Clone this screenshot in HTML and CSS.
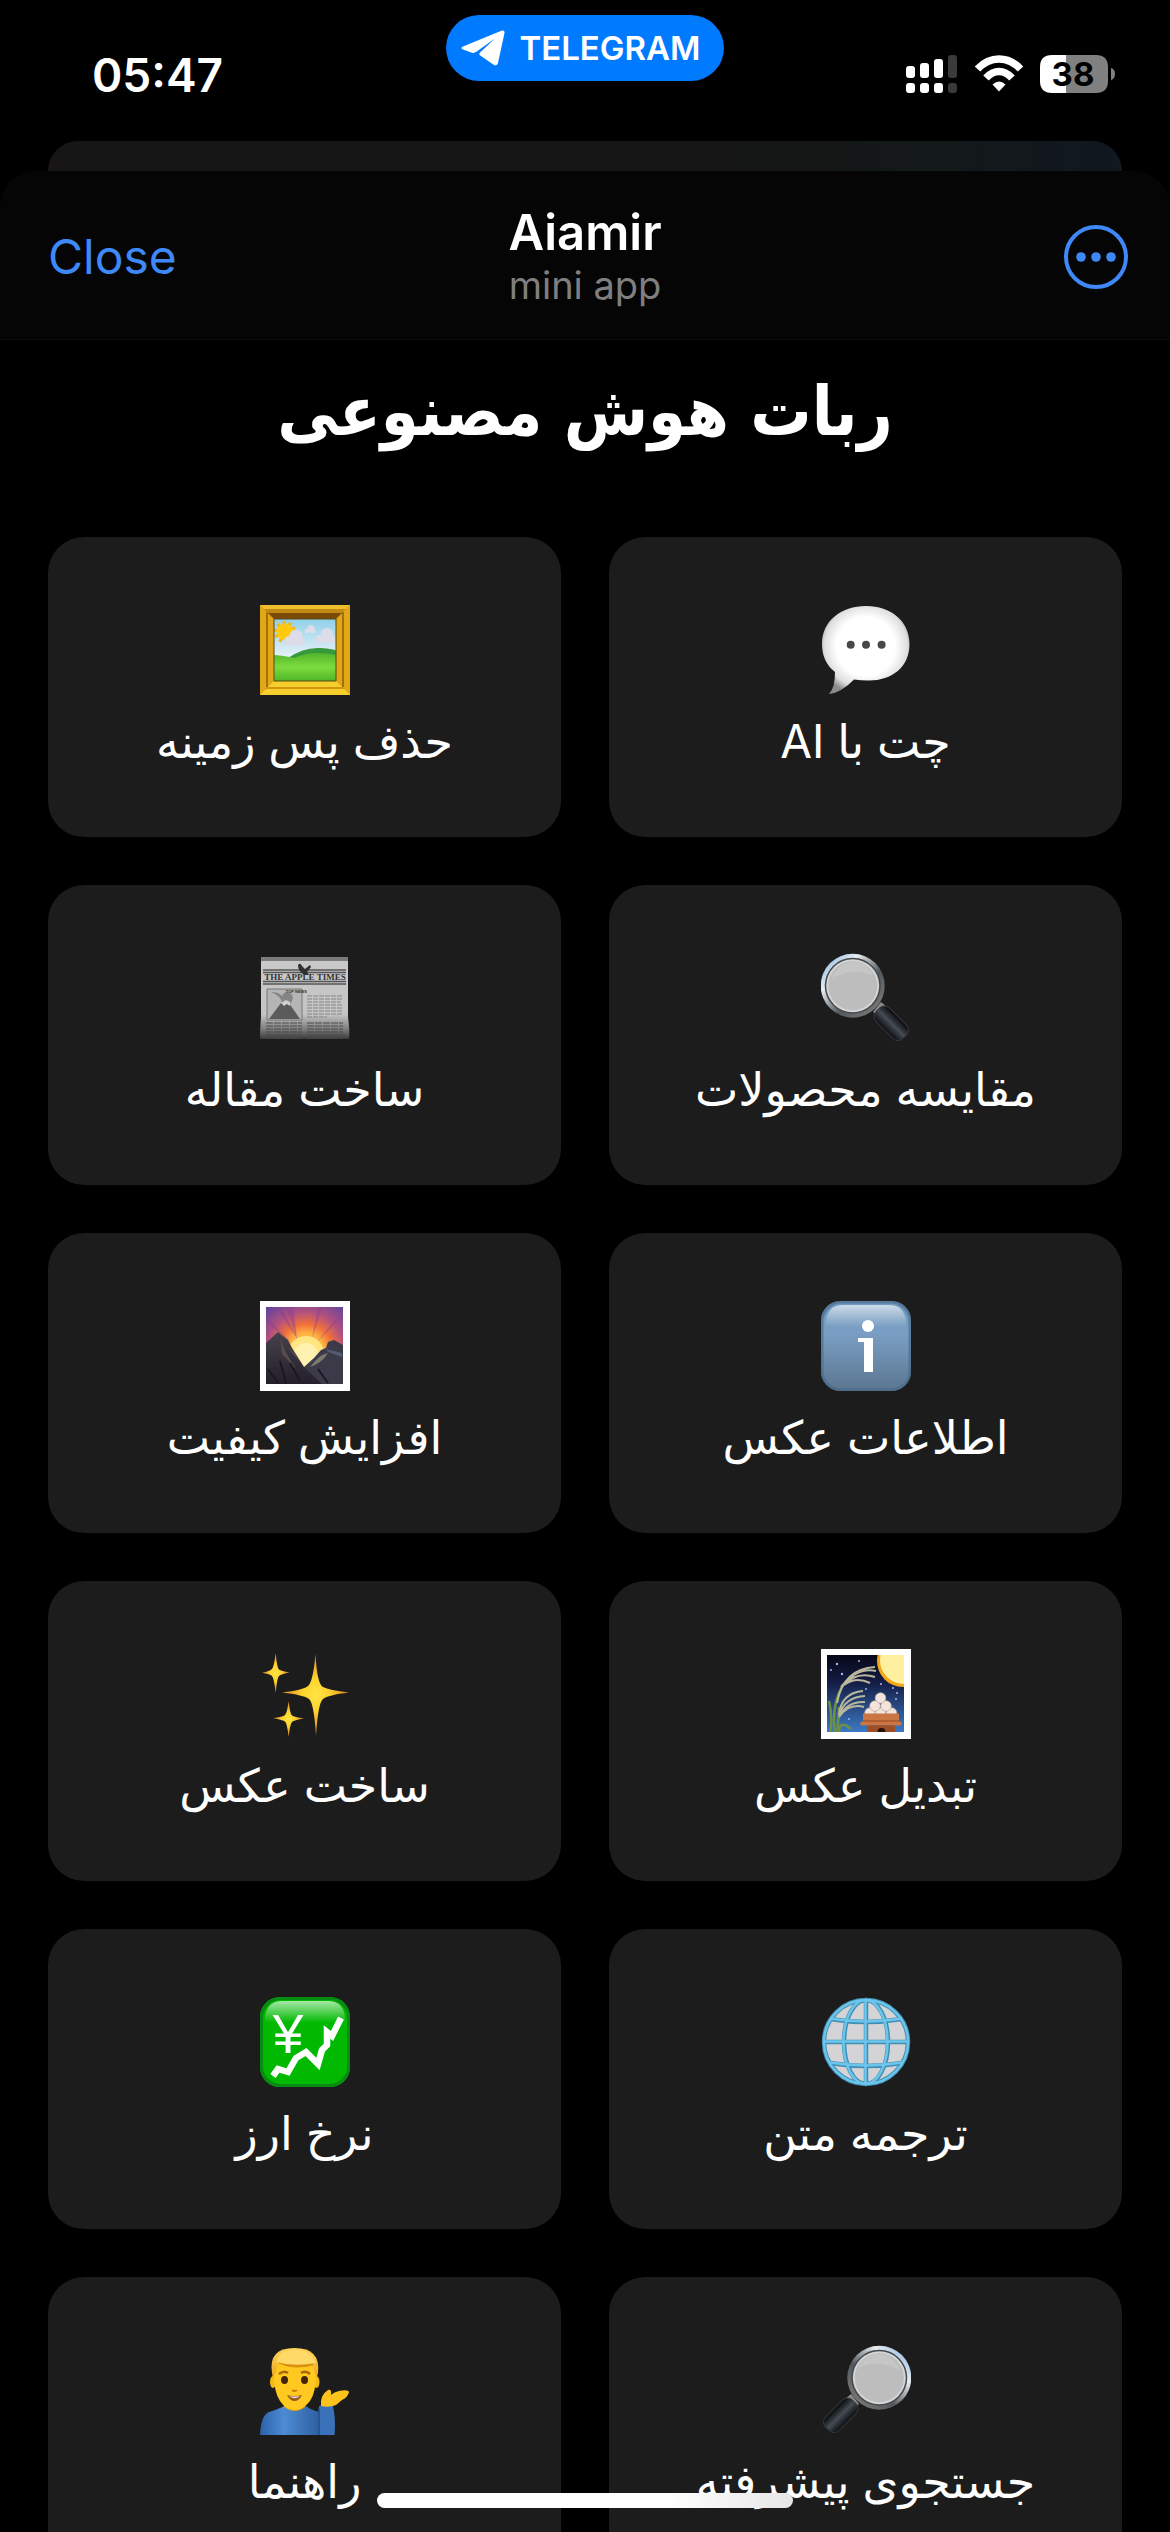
FILE: index.html
```html
<!DOCTYPE html>
<html lang="en">
<head>
<meta charset="utf-8">
<meta name="viewport" content="width=device-width, initial-scale=1">
<title>Aiamir</title>
<link rel="stylesheet" href="styles.css">
</head>
<body>
<header class="status">
  <time class="status-time">05:47</time>
  <a class="pill" href="#">
    <svg class="pill-icon" viewBox="0 0 44 36" aria-hidden="true"><path d="M41 .5 2 16.500q-3 1.600 0 3l9 3.200q2 .6 4-.6L34 8.500 19 22.500q-1.500 1.500.2 3L33 35q3 1.500 4-2L43.500 3q.4-3-2.500-2.500z" fill="#fff"/></svg>
    <span>TELEGRAM</span>
  </a>
  <div class="status-icons">
    <svg width="52" height="38" viewBox="0 0 52 38" aria-hidden="true">
      <g fill="#fff"><rect x="0" y="11" width="9" height="12" rx="3"/><rect x="14" y="8" width="9" height="15" rx="3"/><rect x="28" y="4" width="9" height="19" rx="3"/><rect x="0" y="28" width="9" height="10" rx="3"/><rect x="14" y="28" width="9" height="10" rx="3"/><rect x="28" y="28" width="9" height="10" rx="3"/></g>
      <g fill="#3a3a3a"><rect x="42" y="0" width="9" height="23" rx="3"/><rect x="42" y="28" width="9" height="10" rx="3"/></g>
    </svg>
    <svg width="48" height="38" viewBox="0 0 48 38" aria-hidden="true">
      <g fill="none" stroke="#fff" stroke-width="7.500"><path d="M2.500 14Q12 4 24 4t21.500 10"/><path d="M11 23q6-6.500 13-6.500T37 23"/></g>
      <path d="M24 36.500l-6.500-7q6.500-6 13 0z" fill="#fff"/>
    </svg>
    <svg class="battery" width="76" height="38" viewBox="0 0 76 38" aria-hidden="true">
      <path d="M26 0H12Q0 0 0 12v14q0 12 12 12h14z" fill="#fff"/>
      <path d="M26 0h30q12 0 12 12v14q0 12-12 12H26z" fill="#808080"/>
      <path d="M71 13q4 1 4 6t-4 6z" fill="#808080"/>
      <text x="33" y="31" class="battery-text">38</text>
    </svg>
  </div>
</header>
<div class="backdrop"></div>
<div class="sheet">
  <header class="bar">
    <button class="close" type="button">Close</button>
    <div class="bar-title"><strong>Aiamir</strong><span>mini app</span></div>
    <button class="more" type="button" aria-label="More">
      <svg width="64" height="64" viewBox="0 0 64 64" aria-hidden="true"><circle cx="32" cy="32" r="30" fill="none" stroke="#3e88f7" stroke-width="4"/><g fill="#3e88f7"><circle cx="17" cy="32" r="4.800"/><circle cx="32" cy="32" r="4.800"/><circle cx="47" cy="32" r="4.800"/></g></svg>
    </button>
  </header>
  <main class="content" lang="fa" dir="rtl">
    <h1>ربات هوش مصنوعی</h1>
    <nav class="grid">
      <a class="card" href="#">
        <svg class="icon" viewBox="0 0 90 90" aria-hidden="true">
          <defs><radialGradient id="bub" cx=".5" cy=".46" r=".56"><stop offset=".6" stop-color="#fff"/><stop offset=".85" stop-color="#dedede"/><stop offset="1" stop-color="#8c8c8c"/></radialGradient></defs>
          <path d="M45 1C70 1 88.500 16 88.500 39S71 75.500 48 75.500q-8 0-15-1Q20 88 8 89q6-6 6-22Q1 57 1 39C1 16 20 1 45 1z" fill="url(#bub)"/>
          <g fill="#484848"><circle cx="29.700" cy="39.700" r="4"/><circle cx="45" cy="39.700" r="4"/><circle cx="60.600" cy="39.700" r="4"/></g>
        </svg>
        <span>چت با AI</span>
      </a>
      <a class="card" href="#">
        <svg class="icon" viewBox="0 0 90 90" aria-hidden="true">
          <defs>
            <linearGradient id="sky" x2="0" y2="1"><stop stop-color="#8fd0ea"/><stop offset=".6" stop-color="#e6f1f6"/></linearGradient>
            <linearGradient id="hill" x2="0" y2="1"><stop stop-color="#52b52b"/><stop offset=".5" stop-color="#7cdc3e"/><stop offset="1" stop-color="#4fb627"/></linearGradient>
          </defs>
          <path d="M0 0h90v90H0z" fill="#e0a716"/>
          <path d="M0 0h90L76 14H14z" fill="#c28a12"/><path d="M0 0h90l-4 4H4z" fill="#f0bd2b"/><path d="M8 8h74l-6 6H14z" fill="#7a4a08"/>
          <path d="M0 90h90L76 76H14z" fill="#f6cf2c"/><path d="M5 84h80l-2-2H7z" fill="#cf970f"/>
          <path d="M7 7v75M83 7v75" stroke="#a66f0d" stroke-width="2"/>
          <path d="M14 14h62v62H14z" fill="url(#sky)"/>
          <circle cx="25" cy="27" r="9.500" fill="none" stroke="#f5b50b" stroke-width="3" stroke-dasharray="3 3"/><circle cx="25" cy="27" r="8.500" fill="#ffc90e"/>
          <g fill="#dcdde8"><circle cx="29" cy="36" r="5"/><circle cx="36" cy="31" r="6.500"/><circle cx="39" cy="36" r="5"/><path d="M28 35h12v6H28z"/><circle cx="60" cy="34" r="4"/><circle cx="67" cy="29" r="6"/><circle cx="71" cy="34" r="4"/><path d="M60 33h12v5H60z"/><circle cx="47" cy="26" r="2.500"/><circle cx="51" cy="23.500" r="3.500"/><circle cx="53" cy="26" r="2.500"/></g>
          <path d="M28 53q16-11 32-10t16 3v16H28z" fill="#37993b"/>
          <path d="M14 50q12 1 20 3 18-8 42-3v26H14z" fill="url(#hill)"/>
          <path d="M14 14h62v62H14z" fill="none" stroke="#5e4714"/>
        </svg>
        <span>حذف پس زمینه</span>
      </a>
      <a class="card" href="#">
        <svg class="icon" viewBox="0 0 90 90" aria-hidden="true">
          <defs>
            <linearGradient id="ring" x2="1" y2="1"><stop stop-color="#75a9dd"/><stop offset=".3" stop-color="#e9edf0"/><stop offset=".6" stop-color="#51575c"/><stop offset="1" stop-color="#8b8680"/></linearGradient>
            <linearGradient id="handle"><stop stop-color="#0a0c0f"/><stop offset=".5" stop-color="#464c54"/><stop offset="1" stop-color="#050607"/></linearGradient>
            <g id="glass">
              <path d="M52 59l8-10 6 5-9 9z" fill="#8a8a8a"/>
              <rect x="-9.500" y="-20" width="19" height="38" rx="7" transform="translate(71 71) rotate(-45)" fill="url(#handle)" stroke="#33383e"/>
              <circle cx="31.700" cy="32.700" r="32" fill="url(#ring)"/><circle cx="31.700" cy="32.700" r="28" fill="#42484c"/><circle cx="31.700" cy="32.700" r="26.500" fill="#d4d4d4"/><circle cx="31.700" cy="32.700" r="24.500" fill="#bdbdbd"/><path d="M11 25q7-16 21-16t20 14q-16-10-41 2z" fill="#c6c6c6"/>
            </g>
          </defs>
          <use href="#glass"/>
        </svg>
        <span>مقایسه محصولات</span>
      </a>
      <a class="card" href="#">
        <svg class="icon" viewBox="0 0 90 90" aria-hidden="true">
          <defs><linearGradient id="paper" x2="0" y2="1"><stop stop-color="#c9c9c9"/><stop offset=".7" stop-color="#c4c4c4"/><stop offset=".88" stop-color="#7d7d7d"/><stop offset="1" stop-color="#393939"/></linearGradient></defs>
          <path d="M1 4h87v60q2 15 1 22H0q0-8 1-22z" fill="url(#paper)"/>
          <path d="M1 4h87v4H1z" fill="#7b7b7b"/>
          <path d="M3 17h83M3 19.500h83M3 28.500h83M3 31h83" stroke="#555" stroke-width="1.500"/>
          <path d="M38 12q2-3 4 1l3 3 5-4 1 2-4 5 2 3h-4q-7-3-7-10z" fill="#303030"/>
          <text x="45" y="27" class="masthead">THE APPLE TIMES</text>
          <path d="M7 36h35v31H7z" fill="#b5b5b5" stroke="#777"/>
          <path d="M9 66l12-16h8l11 16z" fill="#5b5b5b"/><path d="M11 39q8 0 11 4 3-6 8-3t1 10h-9q-1-7-11-11z" fill="#858585"/><path d="M21 50l3 3 3-2 3 2 0-4-4-2z" fill="#d0d0d0"/>
          <text x="47" y="40" class="newsline">TOP NEWS</text>
          <path d="M47 43h35M47 46h36M47 49h34M47 52h36M47 55h35M47 58h36M47 61h35M47 64h20" stroke="#858585" stroke-dasharray="5 1"/>
          <path d="M6 70h36M6 73h36M6 76h36M6 79h36M6 82h36M6 85h36M47 70h36M47 73h36M47 76h36M47 79h36M47 82h36M47 85h36" stroke="#4a4a4a" stroke-dasharray="7 1"/>
        </svg>
        <span>ساخت مقاله</span>
      </a>
      <a class="card" href="#">
        <svg class="icon" viewBox="0 0 90 90" aria-hidden="true">
          <defs>
            <linearGradient id="info" x2="0" y2="1"><stop stop-color="#7198bd"/><stop offset=".35" stop-color="#7a9fc4"/><stop offset="1" stop-color="#5b7690"/></linearGradient>
            <linearGradient id="gloss" x2="0" y2="1"><stop stop-color="#fff" stop-opacity=".65"/><stop offset="1" stop-color="#fff" stop-opacity="0"/></linearGradient>
          </defs>
          <rect width="90" height="90" rx="20" fill="url(#info)"/><rect x="1" y="1" width="88" height="88" rx="19" fill="none" stroke="#466887" stroke-opacity=".6" stroke-width="3"/>
          <path d="M5 26V20Q7 4 22 4h46q15 0 17 16v6z" fill="url(#gloss)"/>
          <circle cx="47" cy="25" r="6" fill="#fff"/><rect x="43" y="37" width="9" height="34" fill="#fff"/><rect x="37" y="37" width="9" height="4" fill="#fff"/>
        </svg>
        <span>اطلاعات عکس</span>
      </a>
      <a class="card" href="#">
        <svg class="icon" viewBox="0 0 90 90" aria-hidden="true">
          <defs>
            <radialGradient id="dawn" gradientUnits="userSpaceOnUse" cx="46" cy="50" r="58"><stop offset=".3" stop-color="#ffb545"/><stop offset=".46" stop-color="#f2713a"/><stop offset=".68" stop-color="#b0507f"/><stop offset="1" stop-color="#60449c"/></radialGradient>
            <linearGradient id="rock" x2="0" y2="1"><stop stop-color="#46414b"/><stop offset="1" stop-color="#231f2b"/></linearGradient>
          </defs>
          <path d="M0 0h90v90H0z" fill="#fff"/><path d="M6 6h77v77H6z" fill="url(#dawn)"/>
          <path d="M40 42L16 6h5zM37 38L26 6h7zM52 38L62 6h-4zM56 42L83 14v-4zM32 42L6 16v4z" fill="#8c4193" opacity=".5"/>
          <circle cx="46" cy="53" r="18" fill="#ffe682"/><circle cx="46" cy="54" r="12" fill="#fff1b0"/>
          <path d="M44 66l10-9 7-8 5-2 2-6 6-2 9 5v39H40z" fill="#3c3949"/><path d="M50 66q12-4 18-14-8 2-13 8z" fill="#7d786c"/><path d="M66 48l16 4v4l-14-5z" fill="#535a70"/>
          <path d="M6 42l12-11 10 8 4 8 12 19 18 17H6z" fill="url(#rock)"/><path d="M20 36l5 14 11 18-14-15zM28 47l7 5 6 10z" fill="#564c4c"/><path d="M8 68l10 14M30 62l10 18M20 60l6 22M58 68l10 14" stroke="#1a1721" stroke-width="2"/>
        </svg>
        <span>افزایش کیفیت</span>
      </a>
      <a class="card" href="#">
        <svg class="icon" viewBox="0 0 90 90" aria-hidden="true">
          <defs><linearGradient id="night" x2="0" y2="1"><stop stop-color="#070716"/><stop offset=".35" stop-color="#141c44"/><stop offset="1" stop-color="#3b7ac4"/></linearGradient><clipPath id="pic"><path d="M6 6h77v77H6z"/></clipPath></defs>
          <path d="M0 0h90v90H0z" fill="#fff"/>
          <g clip-path="url(#pic)">
            <path d="M6 6h77v77H6z" fill="url(#night)"/>
            <circle cx="82" cy="12" r="26" fill="#f5a919"/><circle cx="83" cy="11" r="24" fill="#fff0a0"/>
            <g fill="#a7b6f0"><circle cx="16" cy="15" r="1.200"/><circle cx="21" cy="25" r="1.200"/><circle cx="10" cy="21" r="1"/><circle cx="38" cy="12" r="1"/><circle cx="72" cy="39" r="1"/><circle cx="76" cy="44" r="1"/><circle cx="60" cy="35" r="1"/><circle cx="28" cy="70" r="1"/><circle cx="45" cy="40" r="1"/><circle cx="75" cy="50" r="1"/></g>
            <g fill="none" stroke="#6f9044" stroke-width="2.500"><path d="M14 84Q10 56 22 36M9 84Q12 70 8 52M16 84q2-18 2-26M18 84q0-14 12-4"/></g>
            <g fill="none" stroke="#b9b79c" stroke-width="2"><path d="M16 54Q22 20 54 18M20 38Q36 18 55 22M22 36q14-14 32-8M23 36q12-9 26-2M18 66q2-22 24-24M18 66q6-18 26-19M18 68q8-16 26-15M18 68q10-14 25-10"/></g>
            <g fill="#f3e5de" stroke="#bfa59b" stroke-width=".7"><circle cx="49" cy="64" r="5.300"/><circle cx="59.500" cy="64" r="5.300"/><circle cx="70.500" cy="64" r="5.300"/><circle cx="54" cy="57" r="5.300"/><circle cx="65" cy="57" r="5.300"/><circle cx="59.500" cy="49" r="5.300"/></g>
            <path d="M42 64.500h36v8l3 1-1 3H40l-1-3 3-1z" fill="#cc7544"/><path d="M42 72h36" stroke="#944820"/><path d="M46.500 76.500h27.500v7H46.500z" fill="#9f4d25"/><circle cx="60.500" cy="83" r="4" fill="#25100a"/>
          </g>
        </svg>
        <span>تبدیل عکس</span>
      </a>
      <a class="card" href="#">
        <svg class="icon" viewBox="0 0 90 90" aria-hidden="true">
          <defs><radialGradient id="spark"><stop stop-color="#ffe443"/><stop offset=".4" stop-color="#fdd32f"/><stop offset="1" stop-color="#d9812b"/></radialGradient></defs>
          <g fill="url(#spark)">
            <path d="M55.500 5Q57 35 63 38T89 43.500Q68 46 63 50T56 87Q54 54 49 50T22 43.500Q43 41 48 37T55.500 5z"/>
            <path d="M15.700 4Q17 19 19 20.500t10.500 3Q21 25 19 27t-3.300 17Q14 29 12 27T2 23.700q8-1.500 10-3.700t3.700-16z"/>
            <path d="M28.700 52q1.300 13 3.300 14.500t12 3Q34 71 32 73t-3.300 15Q27 74 25 72.500T13 69q10-1 12-3t3.700-14z"/>
          </g>
        </svg>
        <span>ساخت عکس</span>
      </a>
      <a class="card" href="#">
        <svg class="icon" viewBox="0 0 90 90" aria-hidden="true">
          <circle cx="45" cy="45" r="43" fill="#d4d4d6"/>
          <g fill="none" stroke="#418eb4" stroke-width="4.500"><circle cx="45" cy="45" r="42"/><ellipse cx="45" cy="45" rx="22" ry="42"/><path d="M45 2v86M2 45h86M9 22q36 6 72 0M9 66q36 6 72 0"/></g>
          <g fill="none" stroke="#6cc5ea" stroke-width="2.500"><circle cx="45" cy="45" r="42"/><ellipse cx="44.500" cy="45" rx="22" ry="42"/><path d="M44.500 2v86M2 44.500h86M9 21.500q36 6 72 0M9 65.500q36 6 72 0"/></g>
        </svg>
        <span>ترجمه متن</span>
      </a>
      <a class="card" href="#">
        <svg class="icon" viewBox="0 0 90 90" aria-hidden="true">
          <rect width="90" height="90" rx="20" fill="#00b900"/><rect x="1.500" y="1.500" width="87" height="87" rx="19" fill="none" stroke="#078b12" stroke-width="3"/>
          <path d="M5 26V20Q7 4 22 4h46q15 0 17 16v6z" fill="url(#gloss)"/>
          <text x="28" y="56" class="yen">¥</text>
          <path d="M13 79l5-7 10 3 8-14 10-6 12 12 4-14 5-5v-13l5 4 9-18" fill="none" stroke="#fff" stroke-width="6.500"/>
        </svg>
        <span>نرخ ارز</span>
      </a>
      <a class="card" href="#">
        <svg class="icon" viewBox="0 0 90 90" aria-hidden="true"><g transform="matrix(-1 0 0 1 90 0)"><use href="#glass"/></g></svg>
        <span>جستجوی پیشرفته</span>
      </a>
      <a class="card" href="#">
        <svg class="icon" viewBox="0 0 90 90" aria-hidden="true">
          <defs><linearGradient id="hair" x2="0" y2="1"><stop stop-color="#ffd75c"/><stop offset="1" stop-color="#e79a0c"/></linearGradient><linearGradient id="shirt"><stop stop-color="#2d62aa"/><stop offset=".4" stop-color="#4d8bd4"/><stop offset="1" stop-color="#2d5f9f"/></linearGradient></defs>
          <path d="M0 90q1-20 9-23 12-4 15-6h22q5 4 14 6v23z" fill="url(#shirt)"/>
          <path d="M59 61q7-3 14 0 3 14 1.500 29H59z" fill="#3a72b9"/><path d="M59 63v27" stroke="#254f88" stroke-width="1.500"/>
          <path d="M24 54h21v8q-10 8-21 0z" fill="#e9a20e"/>
          <path d="M12 28Q8 3 34.500 3T58 28l-3 12H14z" fill="url(#hair)"/>
          <ellipse cx="13" cy="37" rx="3" ry="6" fill="#f6b916"/><ellipse cx="56.500" cy="37" rx="3" ry="6" fill="#f6b916"/>
          <path d="M14 30q3-4 4-12 17 7 34 2 2 6 4 10 0 17-6 26-7 9-15.500 9T20 56q-6-9-6-26z" fill="#ffc91f"/>
          <path d="M18 18q16 8 36 2l-2-3-32-3z" fill="#d9920f"/>
          <path d="M16 17Q20 4 36 5t20 13q-22 4-40-1z" fill="#ffda69"/>
          <path d="M19 29q5-4 9-1M41 28q5-3 9 1" fill="none" stroke="#ad650e" stroke-width="2.500"/>
          <ellipse cx="24.500" cy="35" rx="3.500" ry="4" fill="#42240b"/><ellipse cx="44.500" cy="35" rx="3.500" ry="4" fill="#42240b"/>
          <path d="M32 45q2.500 2 5 0" fill="none" stroke="#cf8109" stroke-width="2"/><path d="M27 50q7 2 15 0-3 6-7.500 6T27 50z" fill="#9b5c20"/><path d="M29 51q5 1.500 11 0-5 4-11 0z" fill="#fff"/>
          <path d="M61 61q-1-11 7-16 4-1 3 5 3-3 8-4 9-2 10 1-1 5-7 8l-6 5q-7 3-15 1z" fill="#fcc31b"/>
        </svg>
        <span>راهنما</span>
      </a>
    </nav>
  </main>
</div>
<div class="home"></div>
</body>
</html>
```

FILE: styles.css
```css
* { box-sizing: border-box; }
body {
  margin: 0;
  height: 100vh;
  display: flex;
  flex-direction: column;
  overflow: hidden;
  background: #000;
  color: #fff;
  font-family: Inter, "DejaVu Sans", sans-serif;
}
button { border: 0; padding: 0; background: none; font: inherit; }
a { color: inherit; text-decoration: none; }
svg { display: block; }

.status {
  display: grid;
  grid-template-columns: 1fr auto 1fr;
  align-items: start;
  height: 141px;
  padding: 15px 54px 0 92px;
}
.status-time { padding-top: 32px; font-size: 46px; line-height: 56px; font-weight: 600; }
.pill {
  display: flex;
  align-items: center;
  gap: 14px;
  height: 66px;
  margin-right: 38px;
  padding: 0 23px 0 15px;
  border-radius: 33px;
  background: #007aff;
  font-size: 33px;
  font-weight: 600;
}
.pill-icon { width: 44px; height: 36px; }
.status-icons { display: flex; justify-content: flex-end; gap: 17px; padding-top: 40px; }
.battery { overflow: visible; }
.battery-text { font: 700 33px Inter, sans-serif; text-anchor: middle; fill: #000; }

.backdrop {
  flex: none;
  height: 30px;
  margin: 0 48px;
  border-radius: 30px 30px 0 0;
  background: linear-gradient(90deg, #171516, #161616 10%, #161616 60%, #141818 80%, #101820);
}
.sheet {
  flex: 1;
  min-height: 0;
  display: flex;
  flex-direction: column;
}
.bar {
  flex: none;
  display: grid;
  grid-template-columns: 1fr auto 1fr;
  align-items: center;
  height: 169px;
  padding: 4px 42px 0;
  border-radius: 36px 36px 0 0;
  border-bottom: 1px solid #0b0b0b;
  background: #050505;
}
.close { justify-self: start; padding-left: 6px; color: #3e88f7; font-size: 48px; line-height: 60px; }
.more { justify-self: end; }
.bar-title { display: flex; flex-direction: column; align-items: center; }
.bar-title strong { font-size: 49px; line-height: 56px; font-weight: 600; }
.bar-title span { color: #7f7f7f; font-size: 38px; line-height: 48px; }

.content {
  flex: 1;
  min-height: 0;
  overflow-y: auto;
  scrollbar-width: none;
  padding: 24px 48px 48px;
}
h1 {
  margin: 0 0 77px;
  font-family: "DejaVu Sans Condensed", "DejaVu Sans", sans-serif;
  font-size: 68px;
  line-height: 96px;
  font-weight: 700;
  font-stretch: condensed;
  text-align: center;
}
.grid { display: grid; grid-template-columns: 1fr 1fr; gap: 48px; }
.card {
  display: flex;
  flex-direction: column;
  align-items: center;
  gap: 14px;
  height: 300px;
  padding-top: 68px;
  border-radius: 36px;
  background: #1c1c1c;
  font-size: 46px;
  line-height: 64px;
  white-space: nowrap;
}
.icon { width: 90px; height: 90px; }
.masthead { font: 700 9px "Liberation Serif", serif; text-anchor: middle; fill: #333; }
.newsline { font: 700 4px "Liberation Sans", sans-serif; fill: #333; }
.yen { font: 55px "Liberation Sans", sans-serif; text-anchor: middle; fill: #fff; }

.home {
  position: fixed;
  bottom: 24px;
  left: 50%;
  width: 416px;
  height: 15px;
  margin-left: -208px;
  border-radius: 8px;
  background: linear-gradient(90deg, #fff 70%, #e6e6e6);
}
```
